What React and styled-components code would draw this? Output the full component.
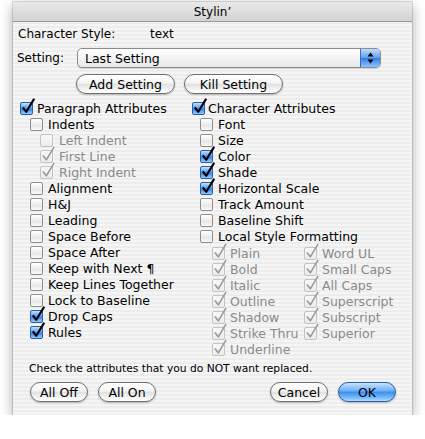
import React from "react";
import styled, { createGlobalStyle, css } from "styled-components";

const Global = createGlobalStyle`
  body {
    margin: 0;
    background: #fff;
    font-family: "DejaVu Sans", "Liberation Sans", sans-serif;
    font-size: 12px;
    color: #000;
  }
`;

const Window = styled.div`
  margin: 2px 0 0 13px;
  width: 399px;
  height: 413px;
  display: flex;
  flex-direction: column;
  box-shadow: 0 4px 12px rgba(0, 0, 0, 0.35), 0 0 0 1px rgba(0, 0, 0, 0.12);
  background: repeating-linear-gradient(#ededed 0 2px, #f5f5f5 2px 4px);
`;

const TitleBar = styled.div`
  height: 20px;
  display: flex;
  align-items: center;
  justify-content: center;
  font-size: 12px;
  background: linear-gradient(#e9e9e9, #d3d3d3);
  border-bottom: 1px solid #9d9d9d;
  box-sizing: border-box;
`;

const Body = styled.div`
  display: flex;
  flex-direction: column;
  flex: 1;
`;

const InfoRow = styled.div`
  display: flex;
  align-items: center;
  height: 16px;
  margin: 4px 0 0 5px;
`;

const Label = styled.span`
  width: ${(p) => p.$w}px;
`;

const SettingRow = styled.div`
  display: flex;
  align-items: center;
  margin: 6px 0 0 4px;
`;

const Popup = styled.div`
  width: 304px;
  height: 20px;
  box-sizing: border-box;
  border: 1px solid #8c8c8c;
  border-radius: 5px;
  background: linear-gradient(#fff, #f3f3f3 50%, #e8e8e8);
  display: flex;
  align-items: center;
  padding-left: 7px;
  overflow: hidden;
  box-shadow: 0 1px 1px rgba(0, 0, 0, 0.15);
`;

const PopupText = styled.span`
  flex: 1;
  font-size: 12.5px;
`;

const PopupCap = styled.span`
  width: 19px;
  align-self: stretch;
  display: flex;
  align-items: center;
  justify-content: center;
  background: linear-gradient(#bfdcff, #5d9eea 50%, #2f7fe0 51%, #8ec3ff);
  border-left: 1px solid #3a6fb7;
`;

const ButtonRow = styled.div`
  display: flex;
  gap: 9px;
  margin: 6px 0 0 63px;
`;

const aquaBlue = css`
  background: linear-gradient(#c7e2ff, #6aaef5 45%, #3d8ee9 50%, #7cc0ff 85%, #b6e0ff);
  border-color: #2e5d9f;
`;

const Button = styled.button`
  width: ${(p) => p.$w || 58}px;
  height: 20px;
  padding: 0;
  border: 1px solid #6f6f6f;
  border-radius: 10px;
  font: inherit;
  font-size: 12.5px;
  color: #000;
  background: linear-gradient(#ffffff, #f4f4f4 45%, #e2e2e2 52%, #f6f6f6 85%, #ffffff);
  box-shadow: 0 1px 2px rgba(0, 0, 0, 0.25);
  ${(p) => p.$primary && aquaBlue}
`;

const Columns = styled.div`
  display: grid;
  grid-template-columns: 172px 1fr;
  margin: 6px 0 0 7px;
  font-size: 12.5px;
`;

const Column = styled.div`
  display: flex;
  flex-direction: column;
`;

const Item = styled.div`
  display: flex;
  align-items: center;
  height: 16px;
  margin-left: ${(p) => p.$indent || 0}px;
  color: ${(p) => (p.$disabled ? "#8a8a8a" : "#000")};
  white-space: nowrap;
`;

const Box = styled.span`
  position: relative;
  width: 13px;
  height: 13px;
  box-sizing: border-box;
  flex: none;
  margin-right: ${(p) => p.$gap}px;
  border-radius: 2px;
  border: 1px solid ${(p) => (p.$disabled ? "#c4c4c4" : p.$checked ? "#2d5fa6" : "#8f8f8f")};
  background: ${(p) =>
    p.$checked && !p.$disabled
      ? "linear-gradient(#c4e1ff, #4e98ee 50%, #2a80e6 51%, #92cbff)"
      : p.$disabled
      ? "linear-gradient(#f8f8f8, #ececec)"
      : "linear-gradient(#ffffff, #eeeeee 50%, #e4e4e4 51%, #fafafa)"};
`;

const Check = styled.svg`
  position: absolute;
  left: 0;
  top: -4px;
  width: 14px;
  height: 15px;
  overflow: visible;
`;

const SubGrid = styled.div`
  display: grid;
  grid-template-columns: 92px 1fr;
  margin: 1px 0 0 20px;
`;

const Note = styled.div`
  font-size: 10.7px;
  margin: 5px 0 0 16px;
`;

const Footer = styled.div`
  display: flex;
  align-items: center;
  margin: 7px 16px 0 17px;
  gap: 10px;
`;

const Spacer = styled.div`
  flex: 1;
`;

function CheckBox({ checked, disabled, gap = 4 }) {
  return (
    <Box $checked={checked} $disabled={disabled} $gap={gap}>
      {checked && (
        <Check viewBox="0 0 14 15">
          <path
            d="M2.3 9 L5.3 12.8 L12.8 0.4"
            fill="none"
            stroke={disabled ? "#9a9a9a" : "#000"}
            strokeWidth={disabled ? 1.6 : 2.1}
            strokeLinecap="round"
            strokeLinejoin="round"
          />
        </Check>
      )}
    </Box>
  );
}

function Opt({ label, checked, disabled, indent, gap }) {
  return (
    <Item $indent={indent} $disabled={disabled}>
      <CheckBox checked={checked} disabled={disabled} gap={gap} />
      {label}
    </Item>
  );
}

const paragraph = [
  ["Alignment"],
  ["H&J"],
  ["Leading"],
  ["Space Before"],
  ["Space After"],
  ["Keep with Next ¶"],
  ["Keep Lines Together"],
  ["Lock to Baseline"],
  ["Drop Caps", true],
  ["Rules", true],
];

const character = [
  ["Font"],
  ["Size"],
  ["Color", true],
  ["Shade", true],
  ["Horizontal Scale", true],
  ["Track Amount"],
  ["Baseline Shift"],
  ["Local Style Formatting"],
];

const local = [
  "Plain", "Word UL",
  "Bold", "Small Caps",
  "Italic", "All Caps",
  "Outline", "Superscript",
  "Shadow", "Subscript",
  "Strike Thru", "Superior",
  "Underline",
];

export default function App() {
  return (
    <>
      <Global />
      <Window>
        <TitleBar>Stylin’</TitleBar>
        <Body>
          <InfoRow>
            <Label $w={132}>Character Style:</Label>
            <span>text</span>
          </InfoRow>
          <SettingRow>
            <Label $w={60}>Setting:</Label>
            <Popup>
              <PopupText>Last Setting</PopupText>
              <PopupCap>
                <svg width="7" height="12" viewBox="0 0 7 12">
                  <path d="M3.5 0.5 L6.5 4.5 H0.5 Z M3.5 11.5 L6.5 7.5 H0.5 Z" fill="#000" />
                </svg>
              </PopupCap>
            </Popup>
          </SettingRow>
          <ButtonRow>
            <Button $w={99}>Add Setting</Button>
            <Button $w={99}>Kill Setting</Button>
          </ButtonRow>
          <Columns>
            <Column>
              <Opt label="Paragraph Attributes" checked />
              <Opt label="Indents" indent={10} gap={5} />
              <Opt label="Left Indent" indent={20} gap={6} disabled />
              <Opt label="First Line" indent={20} gap={6} checked disabled />
              <Opt label="Right Indent" indent={20} gap={6} checked disabled />
              {paragraph.map(([l, c]) => (
                <Opt key={l} label={l} checked={c} indent={10} gap={5} />
              ))}
            </Column>
            <Column>
              <Opt label="Character Attributes" checked gap={3} />
              {character.map(([l, c]) => (
                <Opt key={l} label={l} checked={c} indent={8} gap={5} />
              ))}
              <SubGrid>
                {local.map((l) => (
                  <Opt key={l} label={l} checked disabled gap={5} />
                ))}
              </SubGrid>
            </Column>
          </Columns>
          <Note>Check the attributes that you do NOT want replaced.</Note>
          <Footer>
            <Button>All Off</Button>
            <Button>All On</Button>
            <Spacer />
            <Button>Cancel</Button>
            <Button $primary>OK</Button>
          </Footer>
        </Body>
      </Window>
    </>
  );
}
